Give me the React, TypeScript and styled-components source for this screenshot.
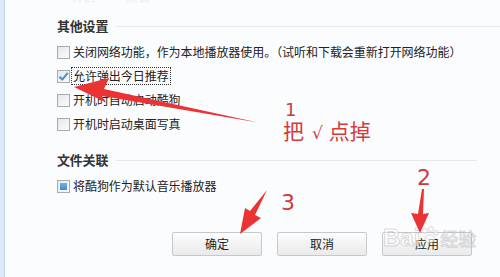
import React from 'react'
import styled, { createGlobalStyle } from 'styled-components'

const GlobalStyle = createGlobalStyle`
  html, body {
    margin: 0;
    padding: 0;
    background: #fbfcfe;
  }
  body {
    font-family: "Noto Sans CJK SC", "Noto Sans", sans-serif;
  }
`

const Page = styled.div`
  position: relative;
  width: 500px;
  height: 277px;
  display: flex;
  overflow: hidden;
  background: #fbfcfe;
  color: #222;
`

const SideStrip = styled.div`
  width: 4px;
  flex: none;
  background: #dceaf7;
  border-right: 1px solid #bcd3ea;
`

const Content = styled.div`
  flex: 1;
  display: flex;
  flex-direction: column;
  padding-left: 52px;
`

const CutRow = styled.div`
  height: 19px;
  margin-top: -13px;
  display: flex;
  align-items: center;
  gap: 30px;
  font-size: 12px;
  color: #dfe1e5;
  opacity: 0.5;
`

const SectionHeader = styled.div<{ $top?: number }>`
  height: 20px;
  margin-top: ${p => p.$top ?? 0}px;
  display: flex;
  align-items: center;
  gap: 8px;
`

const SectionTitle = styled.span`
  font-size: 13px;
  font-weight: 700;
  line-height: 20px;
  color: #333;
  letter-spacing: -0.2px;
`

const Rule = styled.div<{ $end?: number }>`
  flex: 1;
  height: 1px;
  margin-right: ${p => p.$end ?? 0}px;
  background: #e7eaee;
`

const RowList = styled.div`
  display: flex;
  flex-direction: column;
  margin-top: 4px;
`

const Row = styled.label`
  height: 24px;
  display: flex;
  align-items: center;
  gap: 3px;
  font-size: 12px;
  line-height: 16px;
  letter-spacing: -0.05px;
  white-space: nowrap;
`

const Box = styled.span`
  position: relative;
  width: 11px;
  height: 11px;
  flex: none;
  border: 1px solid #a9abaf;
  background: linear-gradient(135deg, #e6e7e9 0%, #fafbfc 100%);
  display: flex;
  align-items: center;
  justify-content: center;
`

const Fill = styled.span`
  width: 7px;
  height: 7px;
  background: linear-gradient(180deg, #6fb1ef 0%, #3d89d6 100%);
`

const FocusText = styled.span`
  outline: 1px dotted #333;
  outline-offset: 0;
  padding: 0 1px;
  margin-left: -1px;
`

const ButtonBar = styled.div`
  display: flex;
  justify-content: flex-end;
  gap: 15px;
  margin-top: 34px;
  padding-right: 28px;
`

const Button = styled.button`
  width: 90px;
  height: 24px;
  padding: 0;
  border: 1px solid #c6c8cb;
  border-radius: 2px;
  background: linear-gradient(180deg, #fdfdfd 0%, #f1f1f2 60%, #e9eaeb 100%);
  font-family: inherit;
  font-size: 12px;
  line-height: 22px;
  color: #222;
`

const Overlay = styled.svg`
  position: absolute;
  left: 0;
  top: 0;
  width: 500px;
  height: 277px;
  pointer-events: none;
`

const Note = styled.span<{ $x: number; $y: number; $size: number }>`
  position: absolute;
  left: ${p => p.$x}px;
  top: ${p => p.$y}px;
  font-size: ${p => p.$size}px;
  line-height: 1;
  color: #d8393d;
  white-space: nowrap;
  font-family: "Noto Sans CJK SC", "Noto Sans", sans-serif;
`

const Tick = styled.span`
  font-family: "DejaVu Sans", sans-serif;
  font-size: 17px;
  margin: 0 6px 0 8px;
`

const Digit = styled(Note)`
  font-family: "DejaVu Sans", "Liberation Sans", sans-serif;
  color: #cc3b3f;
`

const Watermark = styled.div`
  position: absolute;
  left: 383px;
  top: 224px;
  display: flex;
  align-items: center;
  gap: 1px;
  pointer-events: none;
  font-family: "Liberation Sans", "Noto Sans CJK SC", sans-serif;
  font-weight: 700;
  font-size: 24px;
  line-height: 28px;
  color: rgba(255, 255, 255, 0.55);
  -webkit-text-stroke: 1px rgba(150, 152, 156, 0.35);
`

const WaterCjk = styled.span`
  font-family: "Noto Sans CJK SC", sans-serif;
  font-size: 18px;
  font-weight: 400;
`

function Check() {
  return (
    <svg width="11" height="11" viewBox="0 0 11 11">
      <path d="M1.5 5.8 L4.2 8.6 L9.8 1.8" fill="none" stroke="#4d8fcf" strokeWidth="2.1" strokeLinejoin="round" />
    </svg>
  )
}

function Paw() {
  return (
    <svg width="18" height="24" viewBox="0 0 18 24">
      <g fill="rgba(255,255,255,0.6)" stroke="rgba(150,152,156,0.35)">
        <circle cx="4" cy="5" r="2.5" />
        <circle cx="10" cy="3" r="2.5" />
        <circle cx="15" cy="7" r="2.3" />
        <ellipse cx="9" cy="13" rx="5" ry="4" />
      </g>
    </svg>
  )
}

export default function App() {
  return (
    <>
      <GlobalStyle />
      <Page>
        <SideStrip />
        <Content>
          <CutRow>
            <span>▫ 开启</span>
            <span>默认</span>
          </CutRow>
          <SectionHeader $top={10}>
            <SectionTitle>其他设置</SectionTitle>
            <Rule />
          </SectionHeader>
          <RowList>
            <Row>
              <Box />
              关闭网络功能，作为本地播放器使用。（试听和下载会重新打开网络功能）
            </Row>
            <Row>
              <Box>
                <Check />
              </Box>
              <FocusText>允许弹出今日推荐</FocusText>
            </Row>
            <Row>
              <Box />
              开机时自动启动酷狗
            </Row>
            <Row>
              <Box />
              开机时启动桌面写真
            </Row>
          </RowList>
          <SectionHeader $top={14}>
            <SectionTitle>文件关联</SectionTitle>
            <Rule $end={23} />
          </SectionHeader>
          <RowList>
            <Row>
              <Box>
                <Fill />
              </Box>
              将酷狗作为默认音乐播放器
            </Row>
          </RowList>
          <ButtonBar>
            <Button>确定</Button>
            <Button>取消</Button>
            <Button>应用</Button>
          </ButtonBar>
        </Content>

        <Watermark>
          <span>Bai</span>
          <Paw />
          <WaterCjk>经验</WaterCjk>
        </Watermark>

        <Overlay viewBox="0 0 500 277">
          <g fill="#ec3334">
            <polygon points="74,87 109,78 104,89 258,122.5 102,96 105,102" />
            <polygon points="240,234 245,208 250,211 267,190 255,215 261,218" />
            <polygon points="420,233 411,213 418,214 422,189 424,189 423,214 429,213" />
          </g>
        </Overlay>

        <Digit $x={285} $y={101} $size={18}>1</Digit>
        <Note $x={283} $y={120} $size={21}>
          把<Tick>√</Tick>点掉
        </Note>
        <Digit $x={281} $y={192} $size={22}>3</Digit>
        <Digit $x={417} $y={167} $size={22}>2</Digit>
      </Page>
    </>
  )
}
